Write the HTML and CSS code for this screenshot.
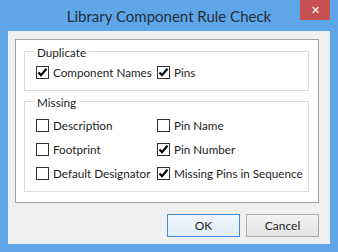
FILE: index.html
```html
<!DOCTYPE html>
<html lang="en">
<head>
  <meta charset="UTF-8" />
  <title>Library Component Rule Check</title>
  <link rel="stylesheet" href="styles.css">
</head>
<body>

<div class="window">
  <div class="titlebar">
    <span class="title">Library Component Rule Check</span>
    <button class="close" type="button">&#x2715;</button>
  </div>

  <div class="client">
    <div class="panel">
      <div class="group dup">
        <span class="caption">Duplicate</span>
        <div class="rows">
          <label class="check"><span class="box on"></span>Component Names</label>
          <label class="check"><span class="box on"></span>Pins</label>
        </div>
      </div>

      <div class="group missing">
        <span class="caption">Missing</span>
        <div class="rows">
          <label class="check"><span class="box"></span>Description</label>
          <label class="check"><span class="box"></span>Pin Name</label>
          <label class="check"><span class="box"></span>Footprint</label>
          <label class="check"><span class="box on"></span>Pin Number</label>
          <label class="check"><span class="box"></span>Default Designator</label>
          <label class="check"><span class="box on"></span>Missing Pins in Sequence</label>
        </div>
      </div>
    </div>

    <div class="buttons">
      <button type="button" class="btn default">OK</button>
      <button type="button" class="btn">Cancel</button>
    </div>
  </div>
</div>

</body>
</html>
```

FILE: styles.css
```css
body {
  margin: 0;
  font-family: 'Lato', 'Noto Sans', sans-serif;
  font-size: 11.7px;
  color: #000;
}

.window {
  width: 338px;
  height: 252px;
  background: #5fa6e8;
  display: flex;
  flex-direction: column;
}

.titlebar {
  height: 31px;
  display: flex;
  justify-content: center;
  align-items: flex-start;
  position: relative;
}

.title {
  margin-top: 6px;
  font-size: 15px;
  color: #1f2e3d;
  line-height: 20px;
}

.close {
  position: absolute;
  top: 0;
  right: 8px;
  width: 30px;
  height: 20px;
  border: none;
  padding: 0;
  background: #c75050;
  color: white;
  font-size: 11px;
  line-height: 20px;
}

.client {
  margin: 0 8px 8px 8px;
  flex: 1;
  background: #f0f0f0;
  display: flex;
  flex-direction: column;
}

.panel {
  margin: 8px 11px 0 7px;
  height: 164px;
  box-sizing: border-box;
  background: white;
  border: 1px solid #a0a0a0;
  padding: 11px 9px 0 8px;
}

.group {
  border: 1px solid #dcdcdc;
  padding: 0 0 11px 11px;
}

.missing {
  margin-top: 10px;
}

.caption {
  display: table;
  margin: -8px 0 0 -2px;
  padding: 0 3px;
  background: white;
  line-height: 16px;
  color: #1e1e1e;
}

.rows {
  display: grid;
  grid-template-columns: 121px auto;
  row-gap: 11px;
}

.dup .rows {
  margin-top: 6px;
}

.missing .rows {
  margin-top: 9px;
}

.check {
  display: flex;
  align-items: center;
  height: 13px;
  line-height: 13px;
  white-space: nowrap;
  color: #1e1e1e;
}

.box {
  width: 13px;
  height: 13px;
  box-sizing: border-box;
  border: 1px solid #333;
  background: white;
  margin-right: 4px;
  flex: none;
}

.box.on {
  background: white url("data:image/svg+xml,%3Csvg xmlns='http://www.w3.org/2000/svg' width='11' height='11'%3E%3Cpath d='M1.5 5.5 L4 8.2 L9.5 1.8' fill='none' stroke='%23000' stroke-width='2.2'/%3E%3C/svg%3E") no-repeat center;
}

.buttons {
  display: flex;
  justify-content: flex-end;
  gap: 6px;
  margin: 11px 11px 0 0;
}

.btn {
  width: 73px;
  height: 23px;
  padding: 0;
  font-family: 'Lato', 'Noto Sans', sans-serif;
  font-size: 12px;
  color: #1e1e1e;
  background: linear-gradient(#f2f2f2, #e5e5e5);
  border: 1px solid #acacac;
}

.btn.default {
  border-color: #3c8cd6;
  background: linear-gradient(#eef5fc, #e2eef9);
}
```
